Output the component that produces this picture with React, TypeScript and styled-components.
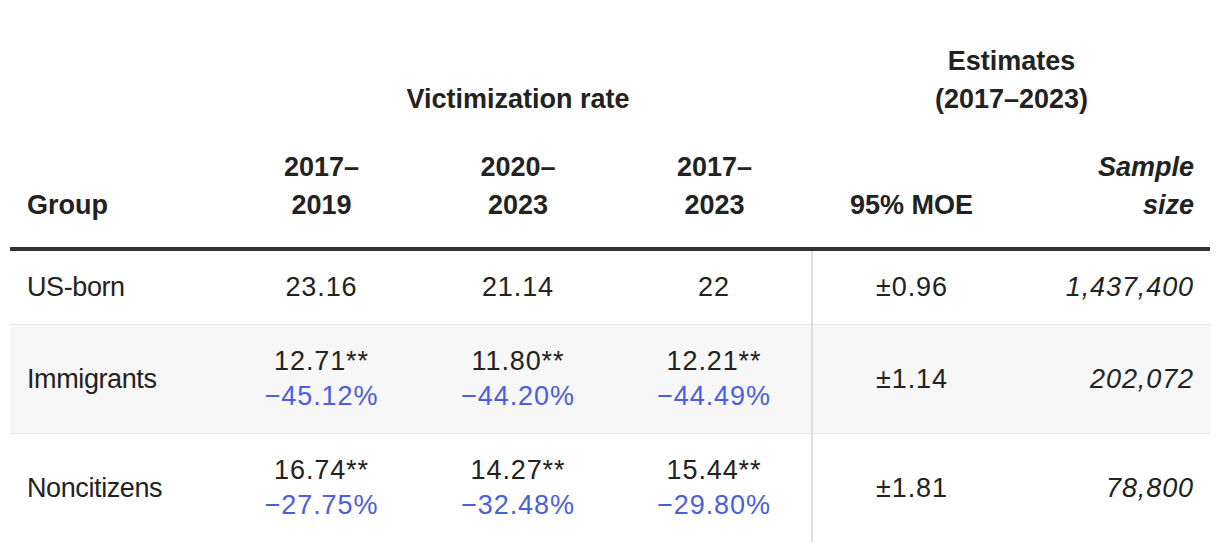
import styled, { createGlobalStyle } from "styled-components";

const GlobalStyle = createGlobalStyle`
  body {
    margin: 0;
    background: #ffffff;
    font-family: "Liberation Sans", Arial, sans-serif;
    color: #222222;
  }
`;

const Wrapper = styled.div`
  padding: 0 10px;
`;

const Table = styled.table`
  width: 1200px;
  border-collapse: collapse;
  table-layout: fixed;
`;

const HeadCell = styled.th<{ $align?: string; $italic?: boolean }>`
  font-size: 27px;
  font-weight: 700;
  line-height: 38px;
  color: #222222;
  vertical-align: bottom;
  text-align: ${({ $align }) => $align || "center"};
  font-style: ${({ $italic }) => ($italic ? "italic" : "normal")};
  padding: 0 16px 0 17px;
`;

const GroupHeadRow = styled.tr`
  th {
    padding-top: 42px;
  }
`;

const ColumnHeadRow = styled.tr`
  border-bottom: 4px solid #333333;
  th {
    padding-top: 30px;
    padding-bottom: 23px;
  }
`;

const BodyRow = styled.tr<{ $shaded?: boolean }>`
  background: ${({ $shaded }) => ($shaded ? "#f7f7f7" : "#ffffff")};
  border-bottom: 1px solid #e6e6e6;
  &:last-child {
    border-bottom: none;
  }
`;

const Cell = styled.td<{ $align?: string; $italic?: boolean; $divider?: boolean; $numeric?: boolean }>`
  font-size: 27px;
  line-height: 35px;
  padding: 19px 16px 19px 17px;
  vertical-align: middle;
  color: #222222;
  text-align: ${({ $align }) => $align || "center"};
  font-style: ${({ $italic }) => ($italic ? "italic" : "normal")};
  letter-spacing: ${({ $numeric }) => ($numeric ? "0.9px" : "-0.4px")};
  border-left: ${({ $divider }) => ($divider ? "2px solid #dddddd" : "none")};
`;

const Change = styled.div`
  color: #4a5fe0;
`;

type Rate = { value: string; change?: string };

type Row = {
  group: string;
  rates: Rate[];
  moe: string;
  sample: string;
};

const rows: Row[] = [
  {
    group: "US-born",
    rates: [{ value: "23.16" }, { value: "21.14" }, { value: "22" }],
    moe: "±0.96",
    sample: "1,437,400",
  },
  {
    group: "Immigrants",
    rates: [
      { value: "12.71**", change: "−45.12%" },
      { value: "11.80**", change: "−44.20%" },
      { value: "12.21**", change: "−44.49%" },
    ],
    moe: "±1.14",
    sample: "202,072",
  },
  {
    group: "Noncitizens",
    rates: [
      { value: "16.74**", change: "−27.75%" },
      { value: "14.27**", change: "−32.48%" },
      { value: "15.44**", change: "−29.80%" },
    ],
    moe: "±1.81",
    sample: "78,800",
  },
];

const App = () => {
  return (
    <Wrapper>
      <GlobalStyle />
      <Table>
        <colgroup>
          <col style={{ width: 213 }} />
          <col style={{ width: 196 }} />
          <col style={{ width: 197 }} />
          <col style={{ width: 196 }} />
          <col style={{ width: 198 }} />
          <col style={{ width: 200 }} />
        </colgroup>
        <thead>
          <GroupHeadRow>
            <HeadCell />
            <HeadCell colSpan={3}>Victimization rate</HeadCell>
            <HeadCell colSpan={2}>
              Estimates
              <br />
              (2017–2023)
            </HeadCell>
          </GroupHeadRow>
          <ColumnHeadRow>
            <HeadCell $align="left">Group</HeadCell>
            <HeadCell>
              2017–
              <br />
              2019
            </HeadCell>
            <HeadCell>
              2020–
              <br />
              2023
            </HeadCell>
            <HeadCell>
              2017–
              <br />
              2023
            </HeadCell>
            <HeadCell>95% MOE</HeadCell>
            <HeadCell $align="right" $italic>
              Sample
              <br />
              size
            </HeadCell>
          </ColumnHeadRow>
        </thead>
        <tbody>
          {rows.map((row, i) => (
            <BodyRow key={row.group} $shaded={i === 1}>
              <Cell $align="left">{row.group}</Cell>
              {row.rates.map((rate, j) => (
                <Cell key={j} $numeric>
                  <div>{rate.value}</div>
                  {rate.change && <Change>{rate.change}</Change>}
                </Cell>
              ))}
              <Cell $divider $numeric>
                {row.moe}
              </Cell>
              <Cell $align="right" $italic $numeric>
                {row.sample}
              </Cell>
            </BodyRow>
          ))}
        </tbody>
      </Table>
    </Wrapper>
  );
};

export default App;
